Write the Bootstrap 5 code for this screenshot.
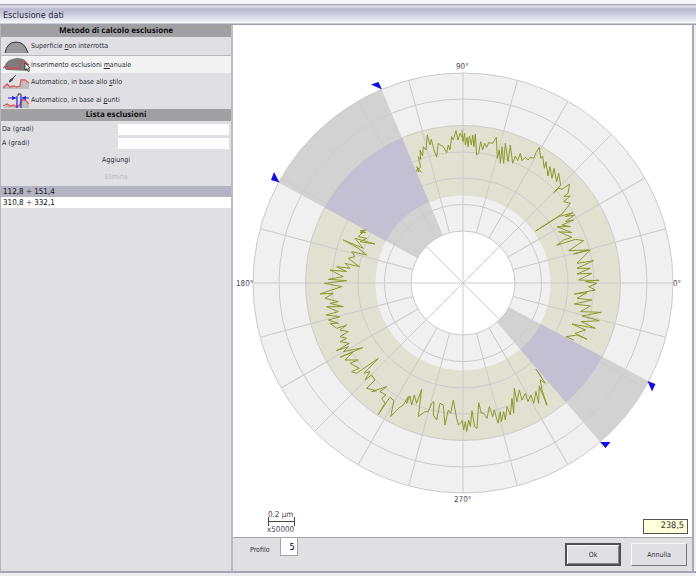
<!DOCTYPE html>
<html lang="it">
<head>
<meta charset="utf-8">
<meta name="viewport" content="width=device-width, initial-scale=1">
<title>Esclusione dati</title>
<link href="https://cdn.jsdelivr.net/npm/bootstrap@5.3.0/dist/css/bootstrap.min.css" rel="stylesheet">
<style>
  body { font-family: "Open Sans", "DejaVu Sans Condensed", sans-serif; font-size: 8px; line-height: 12px; color: #2e2e36; background: #e0dfe4; text-rendering: geometricPrecision; }
  .side-panel, .bottom-bar { font-family: "DejaVu Sans Condensed", "DejaVu Sans", sans-serif; font-size: 7px; }
  .window-title { height: 25px; font-family: "DejaVu Sans Condensed", "DejaVu Sans", sans-serif; font-size: 9px; line-height: 16px; padding: 8px 3px 0; color: #26263a; background: linear-gradient(#f4f4f6 0 4px, #a9a9bb 4px 5px, #e6e6f0 6px, #b8b8d0 9px, #d0d0e0 15px, #f6f6fb 23px, #a0a0ac 24px); }
  .window-frame { border-right: 2px solid #f0f0f4; padding-right: 2px; background: #a9a9b8; }
  .side-panel { flex: 0 0 233px; background: #e0dfe4; border-left: 1px solid #b4b4bc; border-right: 2px solid #bcbcc4; }
  .work-area { background: #e0dfe4; }
  .section-head { background: #a0a0a2; color: #101014; font-family: "Noto Sans", "DejaVu Sans Condensed", sans-serif; font-size: 8px; font-weight: 700; line-height: 12px; text-align: center; margin: 0; }
  .method { height: 18px; padding: 0 2px; gap: 1px; border: 0; background: transparent; color: inherit; text-align: left; width: 100%; }
  .method svg { width: 27px; height: 17px; flex: none; }
  .method.active { background: #f3f3f4; border-top: 1px solid #b8b8bc; height: 18px; }
  .angle-fields { padding: 2px 2px 0 1px; gap: 2px; }
  .angle-input { height: 11px; width: 49%; border: 0; padding: 0 2px; font-size: 8px; background: #fff; }
  .list-actions { padding: 5px 0 3px; gap: 5px; }
  .flat-btn { border: 0; background: transparent; color: inherit; line-height: 12px; padding: 0 4px; }
  .flat-btn:disabled { color: #b9b9c0; }
  .range-row { border: 0; padding: 0 2px; font-size: 8px; line-height: 11px; color: #111; background: #fff; border-radius: 0; white-space: pre; }
  .range-row.selected { background: #b4b3c3; }
  .plot-area { background: #fff; border-bottom: 1px solid #a4a4aa; }
  .plot-area text { font-family: "DejaVu Sans Condensed", "DejaVu Sans", sans-serif; font-size: 8px; fill: #4a3f52; }
  .legend-row { padding: 0 4px 3px 4px; }
  .readout { width: 45px; height: 15px; border: 1px solid #55554e; background: #ffffdc; text-align: right; font-family: "DejaVu Sans Condensed", "DejaVu Sans", sans-serif; font-size: 9px; padding: 0 3px; line-height: 13px; color: #333; }
  .bottom-bar { height: 33px; padding: 0 5px 0 17px; }
  .bottom-bar .controls { gap: 10px; }
  .profile-label { padding-top: 6px; }
  .profile-input { width: 18px; height: 18px; border: 1px solid #a4a4aa; border-top: 0; background: #fff; text-align: right; padding: 0 2px; font-size: 9px; }
  .dialog-btn { width: 56px; height: 23px; border: 1px solid; border-color: #fafafa #77777d #77777d #fafafa; background: #e0dfe4; color: inherit; padding: 0; }
  .dialog-btn.default { border: 2px solid #4e4e54; box-shadow: inset 1px 1px #fff, inset -1px -1px #88888e; }
  .window-foot { height: 5px; background: linear-gradient(#a6a6b0 0 2px, #eeeef2 2px); }
  .trace { fill: none; stroke: #8f982c; stroke-width: 3; stroke-linejoin: round; }
</style>
<script src="https://cdn.jsdelivr.net/npm/bootstrap@5.3.0/dist/js/bootstrap.bundle.min.js"></script>
</head>
<body class="d-flex flex-column min-vh-100">
<header class="window-title">Esclusione dati</header>
<main class="window-frame d-flex flex-grow-1">
  <aside class="side-panel">
    <h2 class="section-head">Metodo di calcolo esclusione</h2>
    <button class="method d-flex align-items-center" type="button">
      <svg viewBox="0 0 27 17"><path d="M2 15Q4 4 13 4T25 15Z" fill="#999"/><path d="M2 15Q4 4 13 4T25 15" fill="none" stroke="#333"/></svg>
      <span>Superficie <u>n</u>on interrotta</span>
    </button>
    <button class="method active d-flex align-items-center" type="button">
      <svg viewBox="0 0 27 17"><path d="M1 11Q3 3 14 2Q26 2 26 15L3 14Z" fill="#7c7c7c"/><path d="M0 12L4 10 6 13 11 12 13 13 17 12 18 6 21 5 23 7 26 9" fill="none" stroke="#c84c50" stroke-width="1.300"/><path d="M22 7V14L24 12.500 25 15.500 26.500 15 25.500 12H27Z" fill="#fff" stroke="#222" stroke-width=".8"/></svg>
      <span>Inserimento esclusioni <u>m</u>anuale</span>
    </button>
    <button class="method d-flex align-items-center" type="button">
      <svg viewBox="0 0 27 17"><path d="M0 14L4 10 7 13 16 13 18 6 26 9V15H0Z" fill="#bdbdbd"/><path d="M0 14L4 10 7 13 11 12 14 13 17 12 18 6 22 6 26 9" fill="none" stroke="#e05a5e" stroke-width="1.300"/><path d="M13 1L10 4M10 4L7 6 6.500 8 8.500 7 10 5Z" fill="#555" stroke="#444"/></svg>
      <span>Automatico, in base allo <u>s</u>tilo</span>
    </button>
    <button class="method d-flex align-items-center" type="button">
      <svg viewBox="0 0 27 17"><path d="M1 15L5 12 9 14 17 12 19 7 26 11V16H1Z" fill="#bdbdbd"/><path d="M0 14L4 12 7 14 11 13 13 15 17 13 18 8 22 8 26 12" fill="none" stroke="#e05a5e" stroke-width="1.300"/><path d="M14 4V16M18 4V16M5 6H12M20 6H26" stroke="#2424dc" stroke-width="1.200"/><path d="M9 4L14 6 9 8ZM23 4L18 6 23 8Z" fill="#2424dc"/><path d="M15 4V2H18V4" fill="none" stroke="#333"/></svg>
      <span>Automatico, in base ai <u>p</u>unti</span>
    </button>
    <h2 class="section-head">Lista esclusioni</h2>
    <div class="angle-fields d-flex flex-column">
      <div class="d-flex justify-content-between align-items-center"><label for="from">Da (gradi)</label><input id="from" class="angle-input" type="text"></div>
      <div class="d-flex justify-content-between align-items-center"><label for="to">A (gradi)</label><input id="to" class="angle-input" type="text"></div>
    </div>
    <div class="list-actions d-flex flex-column align-items-center">
      <button class="flat-btn" type="button">Aggiungi</button>
      <button class="flat-btn" type="button" disabled>Elimina</button>
    </div>
    <ul class="list-group list-group-flush">
      <li class="list-group-item range-row selected">112,8 ÷ 151,4</li>
      <li class="list-group-item range-row">310,8 ÷ 332,1</li>
    </ul>
  </aside>
  <section class="work-area flex-grow-1 d-flex flex-column">
    <div class="plot-area flex-grow-1 d-flex flex-column">
      <svg class="w-100" viewBox="233 25 459 481" role="img" aria-label="Profilo polare">
        <defs>
          <g id="spoke-pair"><path d="M-210 0H-52M52 0H210"/></g>
        </defs>
        <circle cx="463" cy="283" r="210" fill="#f0f0f0"/>
        <circle cx="463" cy="283" r="122.500" fill="none" stroke="#e1e1d1" stroke-width="70"/>
        <circle cx="463" cy="283" r="52" fill="#fff"/>
        <g transform="translate(463 283)" fill="none" stroke="#cbcbcb">
          <circle r="52"/><circle r="78.500"/><circle r="105"/><circle r="131"/><circle r="157.500"/><circle r="184"/><circle r="210"/>
          <path d="M-210 0H210M0-210V210M-148.500-148.500L148.500 148.500M-148.500 148.500L148.500-148.500"/>
          <use href="#spoke-pair" transform="rotate(15)"/><use href="#spoke-pair" transform="rotate(30)"/><use href="#spoke-pair" transform="rotate(60)"/><use href="#spoke-pair" transform="rotate(75)"/>
          <use href="#spoke-pair" transform="rotate(105)"/><use href="#spoke-pair" transform="rotate(120)"/><use href="#spoke-pair" transform="rotate(150)"/><use href="#spoke-pair" transform="rotate(165)"/>
        </g>
        <g id="sectors" transform="translate(463 283)"></g>
        <g class="trace">
          <path transform="translate(230 50) scale(.3333)" d="M575 368L560 350 567 365 558 362 572 352 565 320 572 328 570 300 578 318 580 290 588 300 592 255 600 285 604 268 612 300 620 322 625 280 632 285 640 290 650 308 655 285 660 300 665 260 670 270 678 242 684 270 690 250 696 262"/>
          <path transform="translate(462 50) scale(.3333)" d="M0 240L3 275 8 250 10 285 15 262 18 290 22 258 28 285 32 255 36 290 40 252 44 315 50 310 56 275 62 300 68 280 74 292 80 278 92 280 103 262 106 325 112 300 115 340 120 290 125 340 130 280 138 335 145 285 152 340 160 318 167 332 175 310 180 332 190 322 198 330 205 322 215 325 222 308 232 292 236 325 242 318 247 355 252 335 258 378 264 350 270 385 276 355 284 395 290 370 296 405 275 428 290 415 300 418 323 402 318 430 305 440 325 438 305 455 325 460 300 492 221 543 290 500 333 488 310 500 338 495 310 515 335 510 300 525 325 530 285 530 330 548 290 545 330 562 305 570 284 586 340 568 365 572 320 602 380 600 335 612 385 600 345 640 395 632 345 655 385 655 345 672 390 670 350 690 412 692"/>
          <path transform="translate(462 280) scale(.3333)" d="M410 0L370 5 405 10 380 20 400 30 337 42 375 38 345 55 390 60 337 72 385 78 355 95 418 97 360 108 412 122 358 125 400 145 330 132 370 150 340 160 375 178 345 165 312 170 335 180"/>
          <path transform="translate(230 50) scale(.3333)" d="M410 540L390 542 408 548 390 548 405 540 385 560 410 565 390 575 435 582 375 565 400 595 340 570 385 595 410 615 365 605 375 620 355 625 388 650 345 640 360 655 320 650 350 665 300 660 340 680 295 688 350 692"/>
          <path transform="translate(230 280) scale(.3333)" d="M350 2L283 10 335 20 270 42 310 40 285 55 325 65 300 70 340 80 290 80 325 95 288 105 330 110 295 120 325 130 300 130 320 145 350 135 330 150 355 155 330 170 350 175 330 185 358 190 320 212 355 200 340 215 398 203 330 232 370 215 345 240 385 240 360 250 388 265 365 275 380 280 445 235 402 280 420 275 405 300 425 285 435 300 410 325 440 332 425 335 470 320 450 335 468 345 455 355 465 370 445 403 480 352 492 362 482 410 505 385 520 375 535 350 530 370 540 348 545 375 553 345 560 370 575 328 565 410 585 395 595 395 605 370 612 365 610 405 620 420 630 370 640 375 645 435 655 390 662 400 670 360 680 415 685 435 696 425"/>
          <path transform="translate(462 280) scale(.3333)" d="M0 420L5 450 10 425 14 455 20 420 25 440 30 392 38 440 45 445 50 368 58 400 65 400 75 415 82 380 92 410 97 390 108 430 115 395 118 425 125 395 130 420 135 380 145 405 150 355 155 400 157 325 165 365 172 330 180 360 190 340 198 365 207 345 215 370 222 335 230 370 232 318 255 376 240 330 235 300 250 310 222 268 238 290"/>
        </g>
        <path fill="#1010e0" d="M371 84.500L378.500 82 382 89.500ZM271 180L274 172 279.500 182.500ZM647.500 381L655.500 384 652 391.500ZM600 442H610.500L605.500 448Z"/>
        <text x="456" y="69">90°</text>
        <text x="236" y="286">180°</text>
        <text x="673" y="286">0°</text>
        <text x="454" y="502">270°</text>
      </svg>
      <div class="legend-row d-flex justify-content-between align-items-end mt-auto">
        <svg class="ms-4" width="40" height="28" viewBox="-1 -2 40 28" role="img" aria-label="Scala"><text x="6" y="9">0.2 µm</text><path d="M6 13.500H32M6.500 9V18M32.500 9V18" stroke="#444" fill="none"/><text x="5" y="24">x50000</text></svg>
        <output class="readout">238,5</output>
      </div>
    </div>
    <div class="bottom-bar d-flex justify-content-between">
      <div class="controls d-flex align-items-start"><label class="profile-label" for="profile">Profilo</label><input id="profile" class="profile-input" type="text" value="5"></div>
      <div class="controls d-flex align-items-center"><button class="dialog-btn default" type="button">Ok</button><button class="dialog-btn" type="button">Annulla</button></div>
    </div>
  </section>
</main>
<footer class="window-foot"></footer>
<script>
  // Excluded angular ranges, in degrees counter-clockwise from the right
  const point = (r, deg) => {
    const a = deg * Math.PI / 180;
    return (r * Math.cos(a)).toFixed(2) + ' ' + (-r * Math.sin(a)).toFixed(2);
  };
  const sector = (r0, r1, from, to, fill) =>
    `<path fill="${fill}" d="M${point(r0, from)}L${point(r1, from)}A${r1} ${r1} 0 0 0 ${point(r1, to)}L${point(r0, to)}A${r0} ${r0} 0 0 1 ${point(r0, from)}Z"/>`;
  document.getElementById('sectors').innerHTML = [[112.8, 151.4], [310.8, 332.1]].map(([from, to]) =>
    sector(52, 210, from, to, 'rgba(204,204,204,.85)') + sector(88, 157.5, from, to, '#c2c0d2')).join('');
</script>
</body>
</html>
